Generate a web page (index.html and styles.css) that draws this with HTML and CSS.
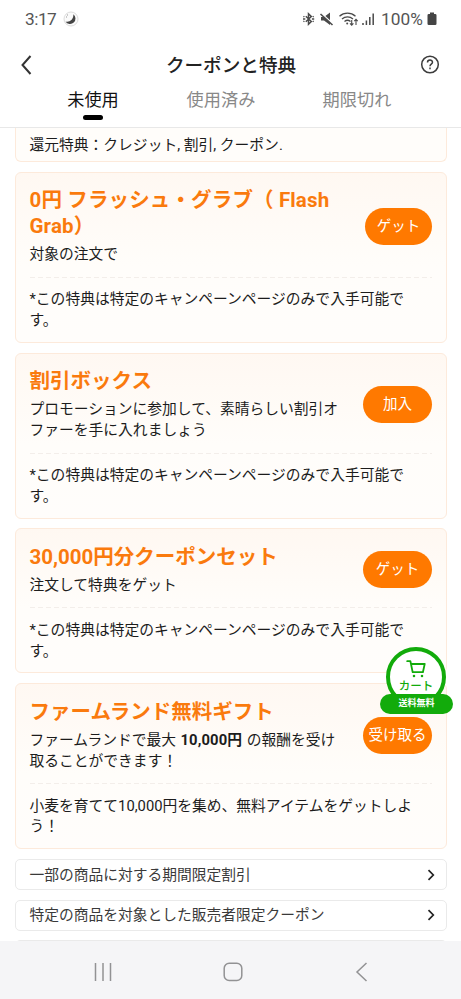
FILE: index.html
```html
<!DOCTYPE html>
<html lang="ja">
<head>
<meta charset="utf-8">
<title>クーポンと特典</title>
<link rel="stylesheet" href="styles.css">
</head>
<body>
<div class="phone">
  <div class="status">
    <span class="time">3:17</span>
    <svg class="moon" width="16" height="16" viewBox="0 0 16 16"><circle cx="8" cy="8" r="7" fill="#fafafa" stroke="#dcdcdc"/><path d="M10.300 3.200a5.400 5.400 0 1 1-7.800 7.200c3.500 1.400 8.500-2 7.800-7.200z" fill="#444"/><path d="M4 4h1M3 6h1" stroke="#999"/></svg>
    <span class="grow"></span>
    <svg class="st-icons" width="78" height="18" viewBox="0 0 78 18" fill="none" stroke="#4a4a4a" stroke-width="1.3">
      <path d="M3.800 6.300L9.300 11.500 6.500 14.200V3.800L9.300 6.500 3.800 11.700" stroke-width="1.500"/>
      <path d="M1 9h2.300M9.900 9h2.300M1.500 6.300l.8.700M1.500 11.700l.8-.7M11.600 6.300l-.8.700M11.600 11.700l-.8-.7" stroke-width="1.500"/>
      <path d="M19 7h3l6-4.500v12.500l-6-4.500h-3z" fill="#4a4a4a" stroke="none"/><path d="M18.600 2.500L31 14" stroke="#fff" stroke-width="1.600"/><path d="M18.500 4L30.500 15" stroke-width="1.600"/>
      <path d="M37.500 6.300c4.600-4.200 11.400-4.200 16 0M40 9c3.200-2.800 7.800-2.800 11 0M42.500 11.500c1.800-1.500 4.200-1.500 6 0"/><circle cx="45.200" cy="13.400" r="1" fill="#4a4a4a" stroke="none"/>
      <path d="M49.700 10v5M48 13.300l1.700 1.900 1.700-1.900M54 15V9.500M52.300 11.200L54 9.300l1.700 1.900" stroke-width="1.100"/>
      <path d="M61 13v2M64.400 10.500V15M67.800 7v8M71.200 3.500V15" stroke-width="1.500"/>
    </svg>
    <span class="pct">100%</span>
    <svg class="battery" width="10" height="14" viewBox="0 0 10 14"><path d="M3 .5h4V2h1.200A1.300 1.300 0 0 1 9.500 3.300v8.400a1.300 1.300 0 0 1-1.300 1.300H1.800A1.300 1.300 0 0 1 .5 11.700V3.300A1.300 1.300 0 0 1 1.800 2H3z" fill="#444"/></svg>
  </div>
  <header class="bar">
    <svg width="12" height="20" viewBox="0 0 12 20" fill="none" stroke="#333" stroke-width="2"><path d="M10.500 1L2.500 10l8 9"/></svg>
    <h1>クーポンと特典</h1>
    <svg width="20" height="20" viewBox="0 0 20 20" fill="none" stroke="#3c3c3c" stroke-width="1.500"><circle cx="10" cy="9.500" r="8.300"/><path d="M7.500 7.500c0-3.300 5-3.300 5-.2 0 1.900-2.500 1.900-2.500 3.900"/><path d="M10 12.600v1.600"/></svg>
  </header>
  <nav class="tabs">
    <span class="tab active">未使用</span>
    <span class="tab">使用済み</span>
    <span class="tab last">期限切れ</span>
  </nav>
  <main class="list">
    <section class="card partial"><p>還元特典：クレジット, 割引, クーポン.</p></section>
    <section class="card">
      <div class="head"><div><h2 class="flash">0円 フラッシュ・グラブ（ Flash<br>Grab）</h2><p>対象の注文で</p></div><button class="narrow">ゲット</button></div>
      <svg class="rule" height="1"><line x1="0" y1=".5" x2="100%" y2=".5"/></svg>
      <p>*この特典は特定のキャンペーンページのみで入手可能で<br>す。</p>
    </section>
    <section class="card">
      <div class="head"><div><h2>割引ボックス</h2><p>プロモーションに参加して、素晴らしい割引オ<br>ファーを手に入れましょう</p></div><button>加入</button></div>
      <svg class="rule" height="1"><line x1="0" y1=".5" x2="100%" y2=".5"/></svg>
      <p>*この特典は特定のキャンペーンページのみで入手可能で<br>す。</p>
    </section>
    <section class="card">
      <div class="head"><div><h2>30,000円分クーポンセット</h2><p>注文して特典をゲット</p></div><button>ゲット</button></div>
      <svg class="rule" height="1"><line x1="0" y1=".5" x2="100%" y2=".5"/></svg>
      <p>*この特典は特定のキャンペーンページのみで入手可能で<br>す。</p>
    </section>
    <section class="card">
      <div class="head"><div><h2>ファームランド無料ギフト</h2><p class="reward">ファームランドで最大 <b>10,000円</b> の報酬を受け<br>取ることができます！</p></div><button>受け取る</button></div>
      <svg class="rule" height="1"><line x1="0" y1=".5" x2="100%" y2=".5"/></svg>
      <p>小麦を育てて10,000円を集め、無料アイテムをゲットしよ<br>う！</p>
    </section>
    <div class="row"><span>一部の商品に対する期間限定割引</span><svg width="8" height="12" viewBox="0 0 8 12"><path d="M1.500 1.200L6.300 6l-4.800 4.800"/></svg></div>
    <div class="row"><span>特定の商品を対象とした販売者限定クーポン</span><svg width="8" height="12" viewBox="0 0 8 12"><path d="M1.500 1.200L6.300 6l-4.800 4.800"/></svg></div>
    <div class="row"></div>
  </main>
  <footer class="sysnav">
    <svg width="20" height="20" viewBox="0 0 20 20"><path d="M2.500 1v18M10 1v18M17.500 1v18"/></svg>
    <svg width="20" height="20" viewBox="0 0 20 20"><rect x="1.200" y="1.200" width="17.600" height="17.200" rx="5"/></svg>
    <svg width="20" height="20" viewBox="0 0 20 20"><path d="M14.500 1L5 10l9.500 9"/></svg>
  </footer>
  <div class="cart">
    <div class="circle">
      <svg width="20" height="18" viewBox="0 0 20 18" fill="none" stroke="#12ab0b" stroke-width="1.800" stroke-linejoin="round" stroke-linecap="round"><path d="M1.200 1.200h3.200L6.700 12.200h10.200L18.700 4H5"/><path d="M8 16h.01M16 16h.01" stroke-width="2.600"/></svg>
      <span>カート</span>
    </div>
    <div class="pill">送料無料</div>
  </div>
</div>
</body>
</html>
```
FILE: styles.css
```css
* { box-sizing: border-box; }
body, h1, h2, p { margin: 0; }
body {
  background: #fff;
  color: #1c1c1c;
  font-family: Roboto, "Noto Sans CJK JP", sans-serif;
}
.phone {
  position: relative;
  width: 461px;
  height: 999px;
  overflow: hidden;
  display: flex;
  flex-direction: column;
}
.status {
  flex: none;
  height: 38px;
  padding: 0 24px 0 25px;
  display: flex;
  align-items: center;
  color: #555;
  font-size: 17.300px;
}
.time { letter-spacing: -.5px; }
.moon { margin-left: 7px; }
.grow { flex: 1; }
.pct { margin-left: 1px; width: 45px; white-space: nowrap; }
.battery { margin-left: 1px; }
.bar {
  flex: none;
  height: 54px;
  padding: 0 21px 0 20px;
  display: flex;
  align-items: center;
  justify-content: space-between;
}
.bar h1 {
  padding: 2px 0 0 10px;
  font-size: 18.6px;
  font-weight: 500;
  line-height: 28px;
  color: #222;
}
.tabs {
  flex: none;
  height: 36px;
  display: grid;
  grid-template-columns: 186px 70px 205px;
  align-items: start;
  border-bottom: 1px solid #e8e8e8;
  font-size: 17.2px;
  line-height: 17px;
  color: #888;
}
.tab { text-align: center; white-space: nowrap; }
.tab.last { padding-right: 3px; }
.tab.active { color: #111; }
.tab.active::after {
  content: "";
  display: block;
  width: 20px;
  height: 5px;
  margin: 6px auto 0;
  border-radius: 3px;
  background: #000;
}
.list {
  flex: 1;
  min-height: 0;
  overflow: hidden;
  padding: 0 14.5px 0 15px;
}
.card {
  border: 1px solid #fdeadb;
  border-radius: 6px;
  padding: 14.600px 13.500px 10.900px;
  margin-bottom: 9.800px;
  background: linear-gradient(#fff8f2, #fffdfa 55%, #fffdfb);
}
.card p {
  font-size: 14.77px;
  line-height: 20.800px;
  white-space: nowrap;
}
.card.partial {
  height: 34px;
  padding-top: 7px;
  border-top: 0;
  border-radius: 0 0 6px 6px;
  background: #fffdfa;
}
.head { display: flex; align-items: center; justify-content: space-between; }
.head > div { width: 320px; }
.head h2 {
  margin-bottom: 5px;
  font-size: 20.500px;
  line-height: 26px;
  font-weight: 700;
  color: #fa7a0d;
  white-space: nowrap;
}
.head h2.flash { letter-spacing: .14px; }
.card .reward { word-spacing: .8px; }
.card b { font-weight: 700; letter-spacing: .15px; }
.rule { display: block; width: 100%; margin: 11.700px 0 11.500px; }
.rule line { stroke: #f3eeea; stroke-width: 1; stroke-dasharray: 5 3; }
button {
  flex: none;
  width: 69px;
  height: 37px;
  padding: 0;
  border: 0;
  border-radius: 19px;
  background: #ff7900;
  color: #fff;
  font: 14.500px/37px Roboto, "Noto Sans CJK JP", sans-serif;
}
button.narrow { width: 67px; }
.row {
  height: 31.500px;
  margin-bottom: 9.300px;
  padding: 0 11px 0 13.500px;
  border: 1px solid #eaeaea;
  border-radius: 5px;
  display: flex;
  align-items: center;
  justify-content: space-between;
  font-size: 14.750px;
  line-height: 20px;
  color: #3a3a3a;
}
.row svg { fill: none; stroke: #222; stroke-width: 1.700; }
.sysnav {
  flex: none;
  height: 58px;
  padding: 3px 89px 0 93px;
  background: #f5f5f7;
  display: flex;
  align-items: center;
  justify-content: space-between;
}
.sysnav svg { fill: none; stroke: #929294; stroke-width: 1.500; }
.cart {
  position: absolute;
  left: 380px;
  top: 647px;
  width: 73px;
  display: flex;
  flex-direction: column;
  align-items: center;
}
.circle {
  width: 60px;
  height: 60px;
  margin-right: 1px;
  border: 4px solid #12ab0b;
  border-radius: 50%;
  background: #fff;
  padding-top: 9px;
  display: flex;
  flex-direction: column;
  align-items: center;
  color: #12ab0b;
  font-size: 11.500px;
  font-weight: 500;
  line-height: 17px;
}
.pill {
  width: 73px;
  height: 19.500px;
  margin-top: -13px;
  border-radius: 10px;
  background: #12ab0b;
  color: #fff;
  font-size: 9px;
  font-weight: 700;
  line-height: 19px;
  text-align: center;
}
```
